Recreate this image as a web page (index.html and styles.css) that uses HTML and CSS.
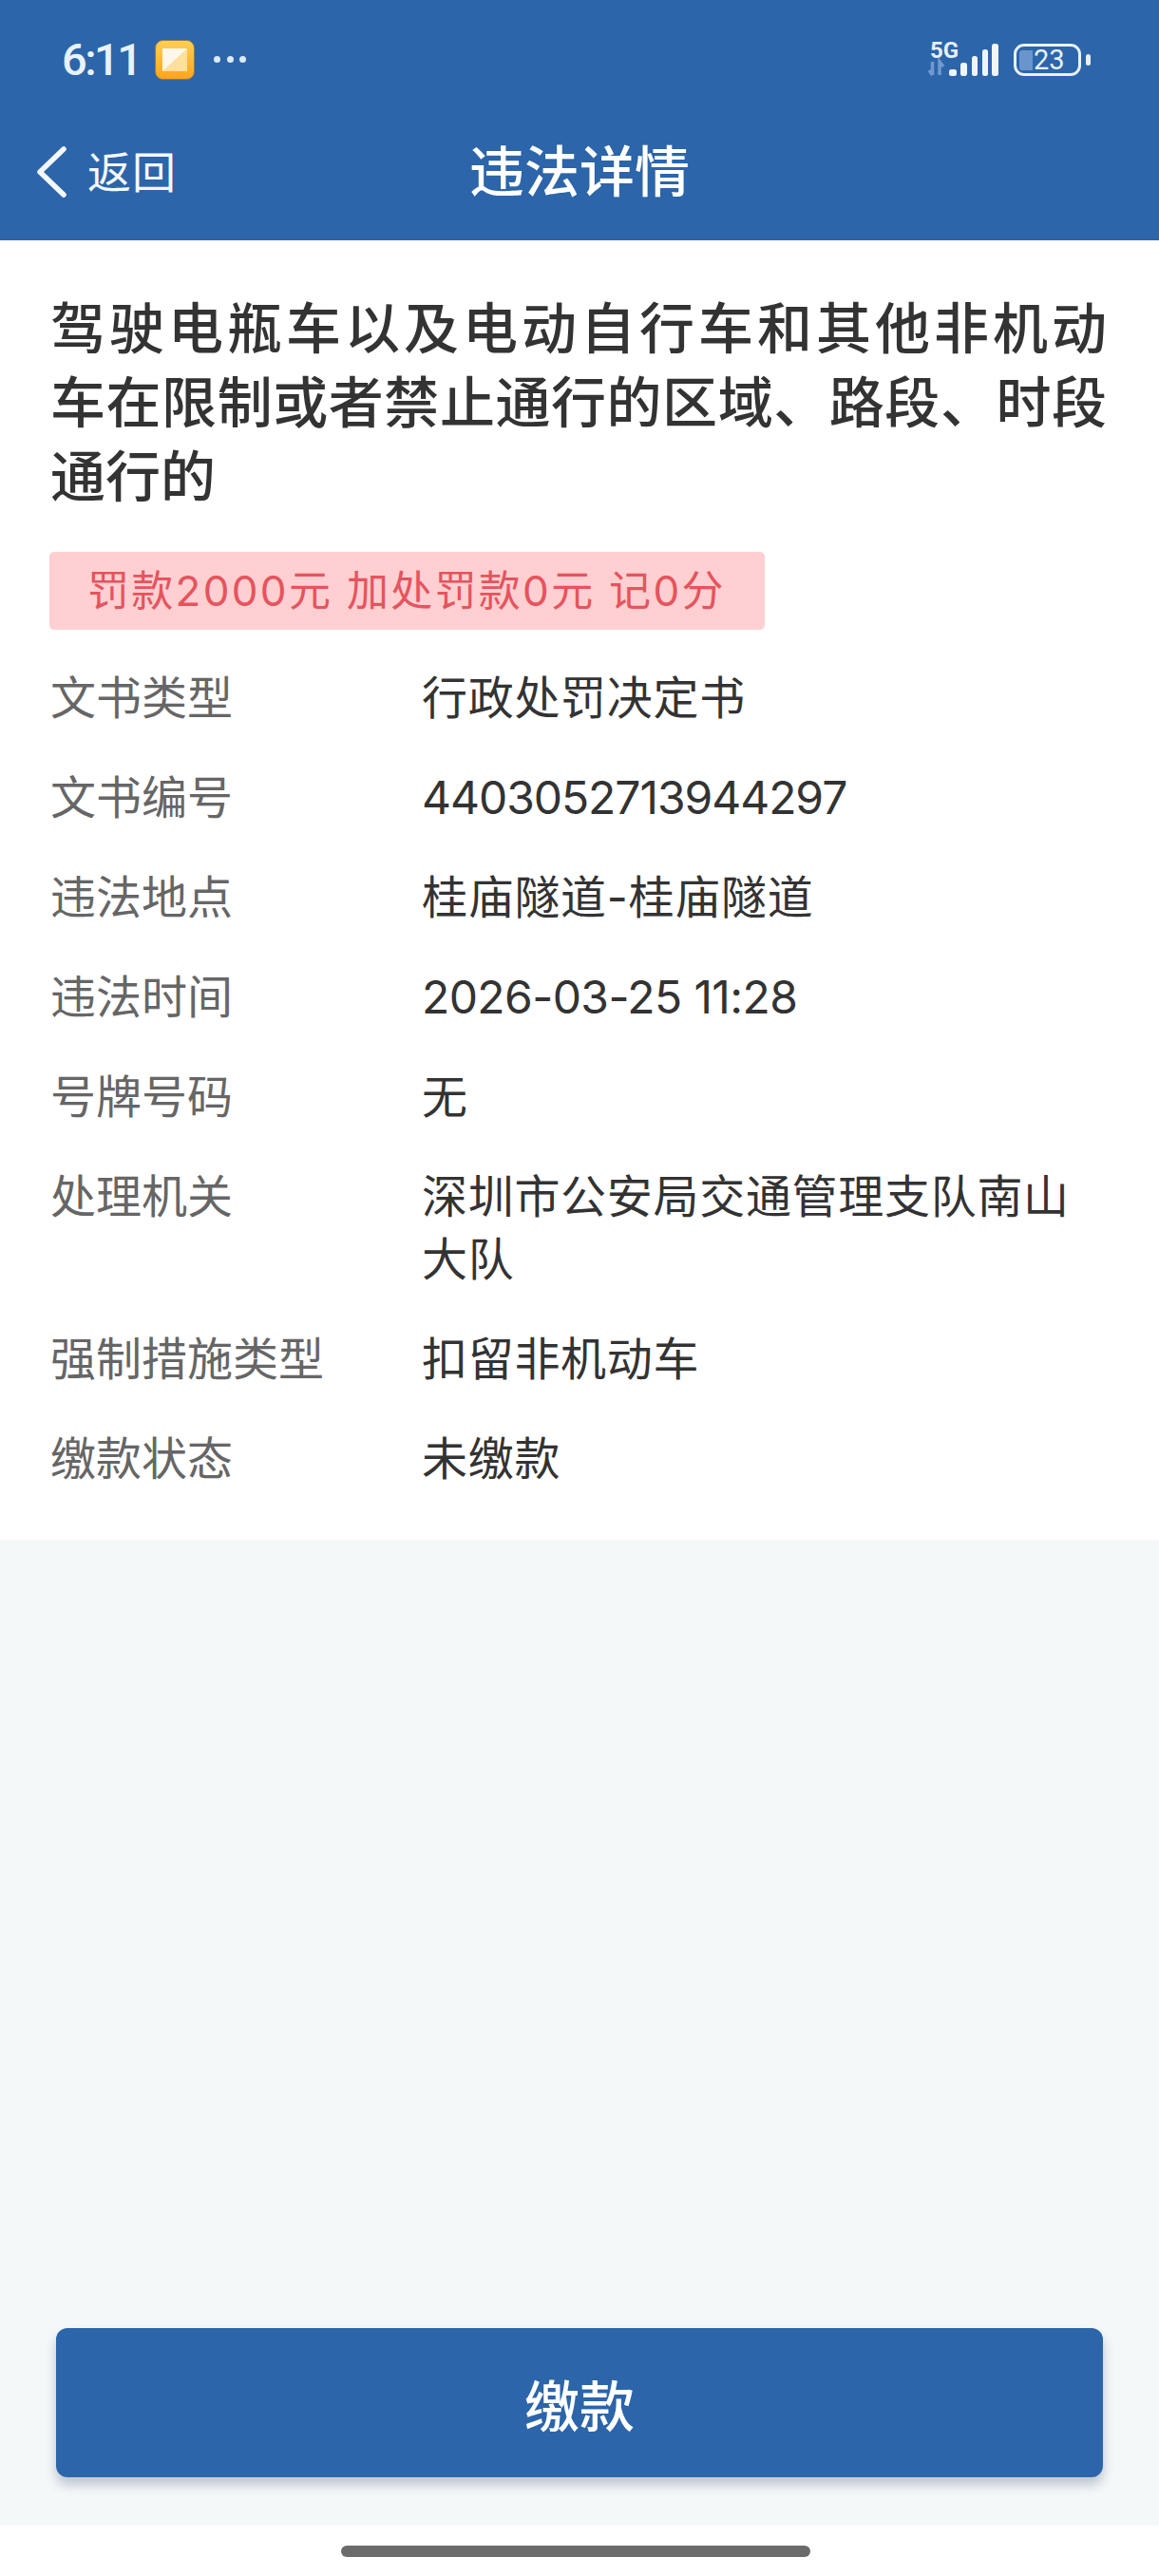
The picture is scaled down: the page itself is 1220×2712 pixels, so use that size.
FILE: index.html
```html
<!DOCTYPE html>
<html lang="zh-CN">
<head>
<meta charset="utf-8">
<title>违法详情</title>
<link rel="stylesheet" href="styles.css">
</head>
<body>
<div class="page">
  <header class="header">
    <div class="status">
      <div class="status-left">
        <span class="time">6:11</span>
        <svg class="app-icon" viewBox="0 0 42 42" aria-hidden="true">
          <defs>
            <linearGradient id="appbg" x1="0" y1="0" x2="0" y2="1">
              <stop offset="0" stop-color="#ffcf55"/>
              <stop offset="1" stop-color="#ffa41c"/>
            </linearGradient>
          </defs>
          <rect x="0.5" y="0.5" width="41" height="41" rx="8" fill="url(#appbg)" stroke="#8a7a50" stroke-width="1"/>
          <rect x="8" y="9" width="26" height="24" fill="#ffdf9c"/>
          <path d="M8 9h26L8 33z" fill="#fff8ea"/>
        </svg>
        <span class="dots"><i></i><i></i><i></i></span>
      </div>
      <div class="status-right">
        <div class="net">
          <span class="net-label">5G</span>
          <svg class="signal" viewBox="0 0 74 38" aria-hidden="true">
            <path d="M4.5 21v14M1 30l3.5 5M12 35V21l4 5" fill="none" stroke="#6f9ad0" stroke-width="3.5"/>
            <rect x="22" y="29" width="8" height="7" rx="2.5" fill="#eef5fd"/>
            <rect x="34" y="22" width="7" height="14" rx="2.5" fill="#eef5fd"/>
            <rect x="46" y="15" width="6" height="21" rx="2.5" fill="#eef5fd"/>
            <rect x="57" y="8" width="6" height="28" rx="2.5" fill="#eef5fd"/>
            <rect x="67" y="2" width="7" height="34" rx="2.5" fill="#eef5fd"/>
          </svg>
        </div>
        <div class="battery">
          <span class="battery-fill"></span>
          <span class="battery-num">23</span>
        </div>
        <span class="battery-nub"></span>
      </div>
    </div>
    <nav class="nav">
      <div class="back">
        <svg class="chevron" viewBox="0 0 32 54" aria-hidden="true">
          <path d="M29 3L4 27l25 24" fill="none" stroke="#f4f8fd" stroke-width="5.5" stroke-linecap="round" stroke-linejoin="round"/>
        </svg>
        <span class="back-text">返回</span>
      </div>
      <h1 class="nav-title">违法详情</h1>
      <div></div>
    </nav>
  </header>

  <main class="detail">
    <h2 class="headline">
      <span class="line line-fit">驾驶电瓶车以及电动自行车和其他非机动</span>
      <span class="line line-fit">车在限制或者禁止通行的区域、路段、时段</span>
      <span class="line">通行的</span>
    </h2>
    <div class="tag">罚款2000元 加处罚款0元 记0分</div>
    <dl class="rows">
      <div class="row"><dt>文书类型</dt><dd>行政处罚决定书</dd></div>
      <div class="row"><dt>文书编号</dt><dd class="num-tight">4403052713944297</dd></div>
      <div class="row"><dt>违法地点</dt><dd>桂庙隧道-桂庙隧道</dd></div>
      <div class="row"><dt>违法时间</dt><dd class="num-date">2026-03-25 11:28</dd></div>
      <div class="row"><dt>号牌号码</dt><dd>无</dd></div>
      <div class="row"><dt>处理机关</dt><dd>深圳市公安局交通管理支队南山大队</dd></div>
      <div class="row"><dt>强制措施类型</dt><dd>扣留非机动车</dd></div>
      <div class="row"><dt>缴款状态</dt><dd>未缴款</dd></div>
    </dl>
  </main>

  <section class="footer-area">
    <button class="pay" type="button">缴款</button>
  </section>

  <div class="home-area"><span class="home-bar"></span></div>
</div>
</body>
</html>
```

FILE: styles.css
```css
* { box-sizing: border-box; }
html, body { margin: 0; padding: 0; }
body {
  font-family: Inter, "Noto Sans CJK SC", "Noto Sans", sans-serif;
  background: #fff;
  color: #333;
}
.page {
  width: 1220px;
  height: 2712px;
  display: flex;
  flex-direction: column;
  overflow: hidden;
}

/* Header */
.header {
  height: 253px;
  background: #2c65a9;
  color: #fff;
  display: flex;
  flex-direction: column;
  flex: none;
}
.status {
  height: 126px;
  padding: 42px 72px 0 65px;
  display: flex;
  justify-content: space-between;
  align-items: flex-start;
}
.status-left { display: flex; align-items: center; height: 41px; }
.time {
  font-family: Roboto, sans-serif;
  font-weight: 500;
  font-size: 47px;
  line-height: 41px;
  letter-spacing: -2.5px;
  color: #e8f2fc;
  width: 98px;
}
.app-icon { width: 42px; height: 42px; flex: none; }
.dots { display: flex; gap: 6.5px; margin-left: 20px; }
.dots i { width: 7px; height: 7px; border-radius: 50%; background: #dcebfa; }
.status-right { display: flex; align-items: flex-start; }
.net { position: relative; width: 74px; height: 38px; margin-top: 2px; }
.net-label {
  position: absolute;
  left: 2px;
  top: -1px;
  font-family: Roboto, sans-serif;
  font-weight: 700;
  font-size: 24px;
  line-height: 20px;
  color: #e4effb;
}
.signal { width: 74px; height: 38px; display: block; }
.battery {
  margin-left: 16px;
  margin-top: 4px;
  width: 71px;
  height: 34px;
  border: 3.5px solid #e8f1fb;
  border-radius: 11px;
  display: flex;
  align-items: center;
  padding-left: 3px;
}
.battery-fill { width: 14px; height: 21px; background: #6a95cc; border-radius: 3px 0 0 3px; flex: none; }
.battery-num {
  font-family: Roboto, sans-serif;
  font-size: 29px;
  line-height: 27px;
  margin-left: 1px;
  color: #e8f1fb;
}
.battery-nub { width: 5px; height: 12px; margin: 15px 0 0 5px; background: #e8f1fb; border-radius: 2.5px; }

.nav {
  flex: 1;
  display: grid;
  grid-template-columns: 1fr auto 1fr;
  align-items: center;
  padding-bottom: 17px;
}
.back { display: flex; align-items: center; padding-left: 38px; }
.chevron { width: 32px; height: 54px; flex: none; }
.back-text { font-size: 46px; line-height: 60px; margin-left: 22px; letter-spacing: 1px; color: #f4f8fd; }
.nav-title { margin: 0; font-size: 58px; font-weight: 500; line-height: 70px; letter-spacing: 0; color: #fff; }

/* Detail */
.detail { background: #fff; padding: 54px 50px 32px 53px; flex: none; }
.headline {
  margin: 0;
  font-size: 58px;
  font-weight: 500;
  line-height: 78px;
  color: #333;
}
.line { display: block; width: 1112px; white-space: nowrap; }
.line-fit { white-space: normal; text-align: justify; text-align-last: justify; }
.tag {
  margin-top: 40px;
  width: 753px;
  height: 82px;
  margin-left: -1px;
  background: #ffcfd2;
  border-radius: 5px;
  padding-left: 40px;
  font-size: 44px;
  line-height: 82px;
  letter-spacing: 2.3px;
  white-space: nowrap;
  color: #e5545d;
}
.rows { margin: 20px 0 0; }
.row {
  display: grid;
  grid-template-columns: 391px 1fr;
  padding: 19px 0 20px;
  font-size: 48px;
  line-height: 66px;
}
.row dt { color: #666; letter-spacing: 0; }
.row dd { margin: 0; color: #333; letter-spacing: 0.7px; }
.row dd.num-tight { letter-spacing: -1.05px; }
.row dd.num-date { letter-spacing: -0.6px; }

/* Footer */
.footer-area {
  flex: 1;
  background: #f5f8f9;
  display: flex;
  flex-direction: column;
  justify-content: flex-end;
  padding: 0 59px 51px;
}
.pay {
  height: 157px;
  border: 0;
  border-radius: 12px;
  background: #2c65a9;
  color: #fff;
  font-family: inherit;
  font-size: 58px;
  font-weight: 500;
  box-shadow: 0 8px 12px rgba(44, 60, 100, 0.28);
}
.home-area {
  height: 53px;
  flex: none;
  background: #fff;
  display: flex;
  justify-content: center;
  padding: 21px 8px 0 0;
}
.home-bar { width: 494px; height: 12px; border-radius: 6px; background: #6b6b6b; }
```
